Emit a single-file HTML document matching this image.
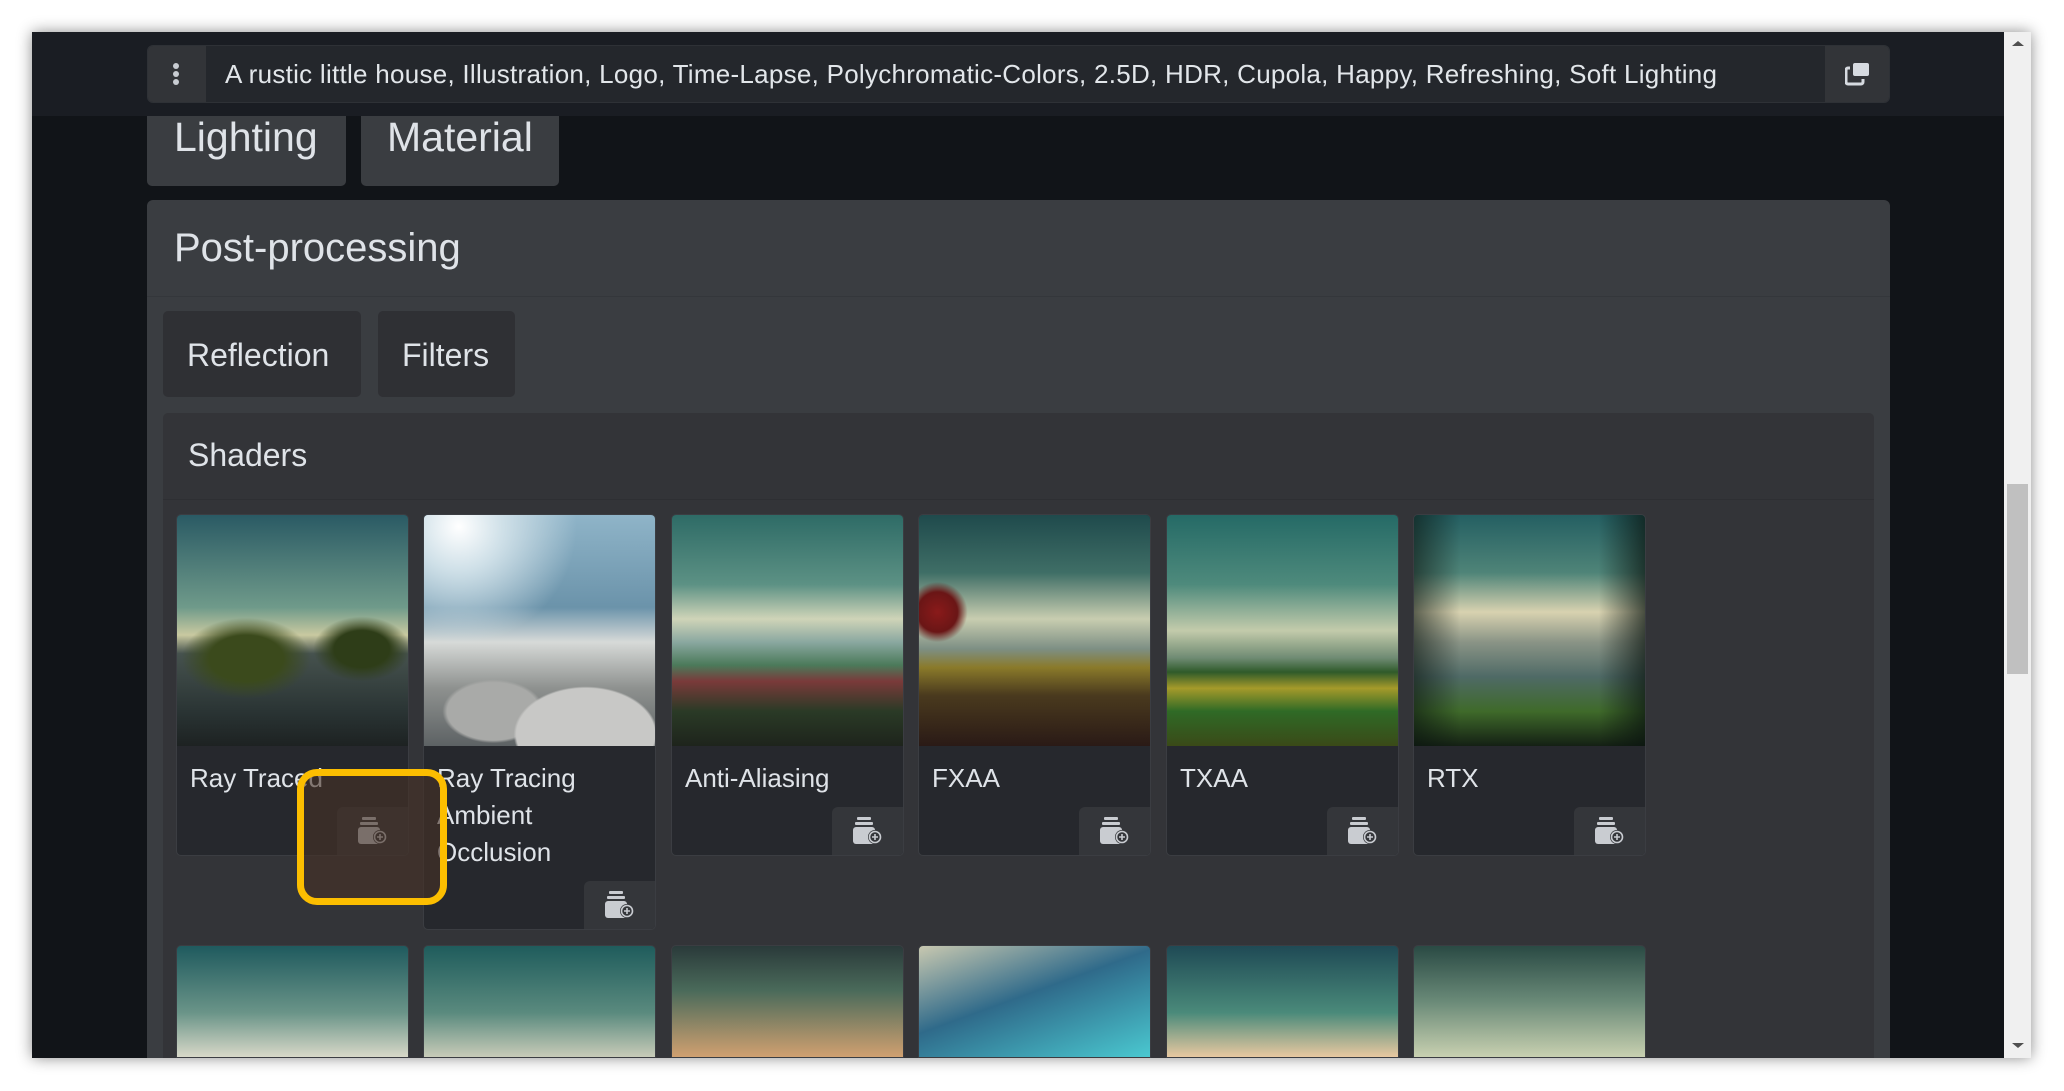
<!DOCTYPE html>
<html><head><meta charset="utf-8"><style>
*{box-sizing:border-box;margin:0;padding:0}
html,body{overflow:hidden}
body{width:2064px;height:1091px;background:#fff;position:relative;font-family:"Liberation Sans",sans-serif;color:#dde2e8}
.win{position:absolute;left:32px;top:32px;width:1999px;height:1026px;background:#111418;box-shadow:0 0 14px rgba(0,0,0,.45);overflow:hidden}
.abs{position:absolute}
.sb{position:absolute;left:1972px;top:0;width:27px;height:1026px;background:#f0f0f0}
.thumb{position:absolute;left:3px;top:452px;width:21px;height:190px;background:#c0c0c0}
.card{position:absolute;width:233px;background:#26282d;border:1px solid #3b3d42;border-radius:5px;overflow:hidden}
.img{height:231px}
.t{position:absolute;left:13px;top:245px;font-size:26px;line-height:37px;color:#dfe3e8}
.btn{position:absolute;right:0;bottom:0;width:71px;height:48px;background:#34363a;border-top-left-radius:6px}
.btn svg{position:absolute;left:19px;top:10px}
</style></head><body>
<div class="win">
  <div class="abs" style="left:115px;top:60px;width:199px;height:94px;background:#3a3d41;border-radius:0 0 5px 5px"></div>
  <div class="abs" style="left:329px;top:60px;width:198px;height:94px;background:#3a3d41;border-radius:0 0 5px 5px"></div>
  <div class="abs" style="left:142px;top:82px;font-size:41px;color:#dfe3e8">Lighting</div>
  <div class="abs" style="left:355px;top:82px;font-size:41px;color:#dfe3e8">Material</div>
  <div class="abs" style="left:0;top:0;width:1972px;height:84px;background:#1a1d23"></div>
  <div class="abs" style="left:115px;top:13px;width:1743px;height:58px;background:#24272c;border:1px solid #2e3136;border-radius:6px;overflow:hidden">
    <div class="abs" style="left:0;top:0;width:58px;height:58px;background:#323438"></div>
    <div class="abs" style="left:25px;top:17px;width:6px;height:6px;border-radius:3px;background:#c8ccd2;box-shadow:0 8px 0 #c8ccd2,0 16px 0 #c8ccd2"></div>
    <div class="abs" style="left:77px;top:13px;font-size:26px;white-space:nowrap;color:#e2e6ea;letter-spacing:0.27px">A rustic little house, Illustration, Logo, Time-Lapse, Polychromatic-Colors, 2.5D, HDR, Cupola, Happy, Refreshing, Soft Lighting</div>
    <div class="abs" style="left:1677px;top:0;width:66px;height:58px;background:#323438"></div>
    <svg class="abs" style="left:1697px;top:16px" width="26" height="24" viewBox="0 0 26 24"><rect x="8" y="1" width="16" height="13" rx="2" fill="#d6dae0"/><path d="M5 6H3a2 2 0 0 0-2 2v12a2 2 0 0 0 2 2h13a2 2 0 0 0 2-2v-3" fill="none" stroke="#d6dae0" stroke-width="3"/></svg>
  </div>
  <div class="abs" style="left:115px;top:168px;width:1743px;height:858px;background:#3a3d41;border-radius:6px 6px 0 0">
    <div class="abs" style="left:0;top:96px;width:1743px;height:1px;background:#34373b"></div>
    <div class="abs" style="left:27px;top:26px;font-size:40px;color:#dfe3e8">Post-processing</div>
    <div class="abs" style="left:16px;top:111px;width:198px;height:86px;background:#2f3034;border-radius:5px"></div>
    <div class="abs" style="left:231px;top:111px;width:137px;height:86px;background:#2f3034;border-radius:5px"></div>
    <div class="abs" style="left:40px;top:137px;font-size:32px;color:#dfe3e8">Reflection</div>
    <div class="abs" style="left:255px;top:137px;font-size:32px;color:#dfe3e8">Filters</div>
    <div class="abs" style="left:16px;top:213px;width:1711px;height:645px;background:#333438;border-radius:5px 5px 0 0">
      <div class="abs" style="left:0;top:86px;width:1711px;height:1px;background:#2e2f33"></div>
      <div class="abs" style="left:25px;top:24px;font-size:32px;color:#dfe3e8">Shaders</div>
    </div>
  </div>
  <div class="card" style="left:144px;top:482px;height:342px"><div class="img" style="background:radial-gradient(ellipse 40% 25% at 30% 62%,#3b4a1c 40%,transparent 70%),radial-gradient(ellipse 30% 20% at 80% 58%,#2e3d18 40%,transparent 70%),linear-gradient(180deg,#2a5a64 0%,#6f9a8a 40%,#c9c9a0 52%,#46524e 60%,#2a3434 85%,#1d2222 100%)"></div><div class="t">Ray Traced</div><div class="btn"><svg width="32" height="28" viewBox="0 0 32 28"><rect x="6" y="0" width="14" height="3" rx="1" fill="#c9ccd1"/><rect x="4" y="5" width="18" height="3" rx="1" fill="#c9ccd1"/><rect x="2" y="10" width="22" height="17" rx="3" fill="#c9ccd1"/><circle cx="24" cy="20" r="7" fill="#34363a"/><circle cx="24" cy="20" r="5.5" fill="none" stroke="#c9ccd1" stroke-width="1.6"/><path d="M24 17v6M21 20h6" stroke="#c9ccd1" stroke-width="1.6"/></svg></div></div>
  <div class="card" style="left:391px;top:482px;height:416px"><div class="img" style="background:radial-gradient(ellipse 60% 40% at 70% 95%,#c8c8c6 50%,transparent 52%),radial-gradient(ellipse 40% 25% at 30% 85%,#a9aaa8 50%,transparent 55%),radial-gradient(circle at 15% 5%,#fff 0,#cfe0e8 15%,transparent 40%),linear-gradient(180deg,#8fb4c8 0%,#6b93aa 40%,#d7dad8 55%,#8e918f 75%,#5d6264 100%)"></div><div class="t">Ray Tracing<br>Ambient<br>Occlusion</div><div class="btn"><svg width="32" height="28" viewBox="0 0 32 28"><rect x="6" y="0" width="14" height="3" rx="1" fill="#c9ccd1"/><rect x="4" y="5" width="18" height="3" rx="1" fill="#c9ccd1"/><rect x="2" y="10" width="22" height="17" rx="3" fill="#c9ccd1"/><circle cx="24" cy="20" r="7" fill="#34363a"/><circle cx="24" cy="20" r="5.5" fill="none" stroke="#c9ccd1" stroke-width="1.6"/><path d="M24 17v6M21 20h6" stroke="#c9ccd1" stroke-width="1.6"/></svg></div></div>
  <div class="card" style="left:639px;top:482px;height:342px"><div class="img" style="background:linear-gradient(180deg,#2e6b66 0%,#5c9184 30%,#cfd4b8 45%,#8aa8a0 55%,#4b7a5a 65%,#7a3a3a 72%,#2a3a26 85%,#1e241c 100%)"></div><div class="t">Anti-Aliasing</div><div class="btn"><svg width="32" height="28" viewBox="0 0 32 28"><rect x="6" y="0" width="14" height="3" rx="1" fill="#c9ccd1"/><rect x="4" y="5" width="18" height="3" rx="1" fill="#c9ccd1"/><rect x="2" y="10" width="22" height="17" rx="3" fill="#c9ccd1"/><circle cx="24" cy="20" r="7" fill="#34363a"/><circle cx="24" cy="20" r="5.5" fill="none" stroke="#c9ccd1" stroke-width="1.6"/><path d="M24 17v6M21 20h6" stroke="#c9ccd1" stroke-width="1.6"/></svg></div></div>
  <div class="card" style="left:886px;top:482px;height:342px"><div class="img" style="background:radial-gradient(circle at 8% 42%,#8a1a1a 0,#6a1616 8%,transparent 12%),linear-gradient(180deg,#1f4a4c 0%,#3f6e66 25%,#c8cdb0 45%,#7d8f84 58%,#8a7a2a 66%,#4a3a1e 78%,#2a1a16 100%)"></div><div class="t">FXAA</div><div class="btn"><svg width="32" height="28" viewBox="0 0 32 28"><rect x="6" y="0" width="14" height="3" rx="1" fill="#c9ccd1"/><rect x="4" y="5" width="18" height="3" rx="1" fill="#c9ccd1"/><rect x="2" y="10" width="22" height="17" rx="3" fill="#c9ccd1"/><circle cx="24" cy="20" r="7" fill="#34363a"/><circle cx="24" cy="20" r="5.5" fill="none" stroke="#c9ccd1" stroke-width="1.6"/><path d="M24 17v6M21 20h6" stroke="#c9ccd1" stroke-width="1.6"/></svg></div></div>
  <div class="card" style="left:1134px;top:482px;height:342px"><div class="img" style="background:linear-gradient(180deg,#256a66 0%,#4e8a7c 30%,#c3cbab 50%,#6e8a72 62%,#2f5a2a 68%,#a59a2a 75%,#2f6a26 85%,#3a4a18 100%)"></div><div class="t">TXAA</div><div class="btn"><svg width="32" height="28" viewBox="0 0 32 28"><rect x="6" y="0" width="14" height="3" rx="1" fill="#c9ccd1"/><rect x="4" y="5" width="18" height="3" rx="1" fill="#c9ccd1"/><rect x="2" y="10" width="22" height="17" rx="3" fill="#c9ccd1"/><circle cx="24" cy="20" r="7" fill="#34363a"/><circle cx="24" cy="20" r="5.5" fill="none" stroke="#c9ccd1" stroke-width="1.6"/><path d="M24 17v6M21 20h6" stroke="#c9ccd1" stroke-width="1.6"/></svg></div></div>
  <div class="card" style="left:1381px;top:482px;height:342px"><div class="img" style="background:linear-gradient(90deg,rgba(10,20,15,.6),transparent 20%,transparent 80%,rgba(10,20,15,.7)),linear-gradient(180deg,#245f62 0%,#4f8478 25%,#d8d2b0 42%,#8a9486 55%,#4f6a66 70%,#3f6a2a 85%,#142014 100%)"></div><div class="t">RTX</div><div class="btn"><svg width="32" height="28" viewBox="0 0 32 28"><rect x="6" y="0" width="14" height="3" rx="1" fill="#c9ccd1"/><rect x="4" y="5" width="18" height="3" rx="1" fill="#c9ccd1"/><rect x="2" y="10" width="22" height="17" rx="3" fill="#c9ccd1"/><circle cx="24" cy="20" r="7" fill="#34363a"/><circle cx="24" cy="20" r="5.5" fill="none" stroke="#c9ccd1" stroke-width="1.6"/><path d="M24 17v6M21 20h6" stroke="#c9ccd1" stroke-width="1.6"/></svg></div></div>
  <div class="card" style="left:144px;top:913px;height:113px;border-radius:5px 5px 0 0;background:linear-gradient(180deg,#1f5a5e,#6a9488 60%,#d8d8c8)"></div>
  <div class="card" style="left:391px;top:913px;height:113px;border-radius:5px 5px 0 0;background:linear-gradient(180deg,#1f5c5c,#5a8a7e 60%,#c8cbb8)"></div>
  <div class="card" style="left:639px;top:913px;height:113px;border-radius:5px 5px 0 0;background:linear-gradient(180deg,#2a3a3a,#4a6a5a 40%,#d0a070)"></div>
  <div class="card" style="left:886px;top:913px;height:113px;border-radius:5px 5px 0 0;background:linear-gradient(160deg,#c8c8b0,#2f6a8a 45%,#4ac8d0)"></div>
  <div class="card" style="left:1134px;top:913px;height:113px;border-radius:5px 5px 0 0;background:linear-gradient(180deg,#1f4a55,#4a8a7a 60%,#e8c8a0)"></div>
  <div class="card" style="left:1381px;top:913px;height:113px;border-radius:5px 5px 0 0;background:linear-gradient(180deg,#2a4a44,#6a8a78 50%,#c8d0b0)"></div>
  <div class="abs" style="left:265px;top:737px;width:150px;height:136px;border:7px solid #fcbe00;border-radius:20px;background:rgba(70,48,36,.6)"></div>
  <div class="sb"><div class="thumb"></div>
    <div class="abs" style="left:8px;top:9px;width:0;height:0;border-left:6px solid transparent;border-right:6px solid transparent;border-bottom:5px solid #505050"></div>
    <div class="abs" style="left:8px;top:1011px;width:0;height:0;border-left:6px solid transparent;border-right:6px solid transparent;border-top:5px solid #505050"></div>
  </div>
</div>
</body></html>
